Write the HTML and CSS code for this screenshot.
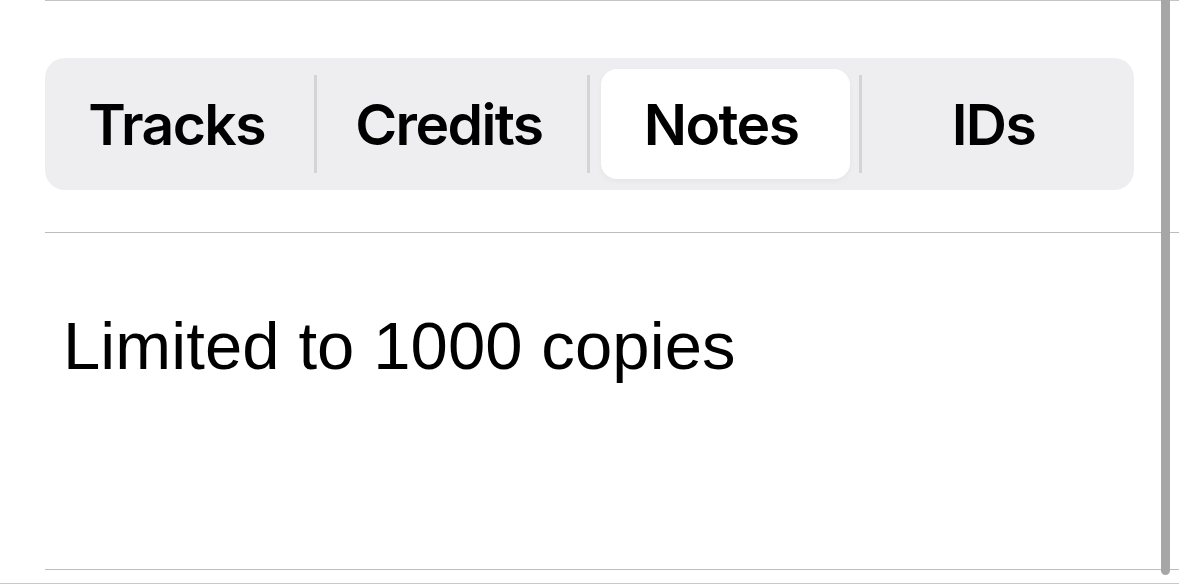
FILE: index.html
```html
<!DOCTYPE html>
<html lang="en">
<head>
<meta charset="utf-8">
<link rel="stylesheet" href="styles.css">
</head>
<body>
<div class="page">
  <div class="list">
    <div class="row row-seg">
      <div class="segmented">
        <div class="seg"><span class="seg-label">Tracks</span></div>
        <div class="seg seg-div"><span class="seg-label">Credits</span></div>
        <div class="seg seg-div"><span class="seg-label seg-selected">Notes</span></div>
        <div class="seg seg-div"><span class="seg-label">IDs</span></div>
      </div>
    </div>
    <div class="row row-note">
      <p class="note">Limited to 1000 copies</p>
    </div>
  </div>
  <div class="footer-line"></div>
  <div class="scrollbar"></div>
</div>
</body>
</html>
```

FILE: styles.css
```css
html, body {
  margin: 0;
  padding: 0;
  background: #ffffff;
}

.page {
  position: relative;
  width: 1179px;
  height: 585px;
  overflow: hidden;
  font-family: "Liberation Sans", Arial, sans-serif;
  color: #000;
}

.list {
  margin-left: 45px;
  border-top: 1px solid #c4c4c6;
}

.row {
  border-bottom: 1px solid #bdbdbf;
}

.row-seg {
  padding: 57px 45px 42px 0;
}

.segmented {
  display: grid;
  grid-template-columns: repeat(4, 1fr);
  height: 132px;
  background: #eeeef0;
  border-radius: 20px;
}

.seg {
  position: relative;
  display: flex;
  padding: 11px 12px 11px 11px;
}

.seg-div::before {
  content: "";
  position: absolute;
  left: -3px;
  top: 17px;
  bottom: 17px;
  width: 3px;
  background: #d3d3d8;
}

.seg-label {
  flex: 1;
  display: flex;
  align-items: center;
  justify-content: center;
  padding-right: 8px;
  border-radius: 16px;
  font-family: Inter, "Liberation Sans", sans-serif;
  font-weight: 600;
  font-size: 57px;
  letter-spacing: -1.6px;
}

.seg-selected {
  position: relative;
  z-index: 1;
  background: #ffffff;
  box-shadow: 0 2px 6px rgba(0, 0, 0, 0.04);
}

.row-note {
  height: 337px;
  box-sizing: border-box;
  padding: 73px 0 0 18px;
}

.note {
  margin: 0;
  font-size: 67px;
  line-height: 80px;
  letter-spacing: 0.1px;
}

.footer-line {
  margin-top: 13px;
  border-top: 1px solid #c8c8ca;
}

.scrollbar {
  position: absolute;
  left: 1161px;
  top: 0;
  width: 9px;
  height: 575px;
  border-radius: 0 0 5px 5px;
  background: #a6a6a6;
  z-index: 2;
}
```
